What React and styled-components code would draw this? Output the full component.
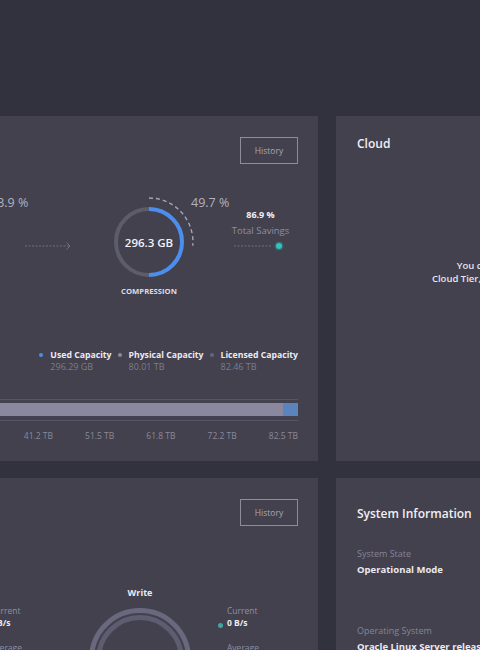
import React from 'react';
import styled, { createGlobalStyle } from 'styled-components';

const Global = createGlobalStyle`
  html, body {
    margin: 0;
    background: #32313e;
    overflow: hidden;
    font-family: "Open Sans", "DejaVu Sans", sans-serif;
    color: #ecebf2;
  }
  * { box-sizing: border-box; }
`

const Page = styled.div`
  display: flex;
  flex-direction: column;
  gap: 17px;
  padding-top: 116px;
  margin-left: -300px;
  width: 1200px;
`

const Row = styled.div`
  display: grid;
  grid-template-columns: 618px 403px;
  gap: 18px;
`

const Panel = styled.section`
  display: flex;
  flex-direction: column;
  background: #42414d;
  height: ${p => p.$h}px;
  padding: 21px 20px 20px 21px;
  overflow: hidden;
`

const Header = styled.div`
  display: flex;
  justify-content: space-between;
  align-items: center;
  height: 27px;
`

const Title = styled.h2`
  margin: ${p => p.$mt || 0}px 0 0;
  font-size: ${p => p.$size || 12}px;
  font-weight: 600;
  line-height: 14px;
  color: #f0eff5;
`

const HistoryButton = styled.button`
  width: 58px;
  height: 27px;
  background: transparent;
  border: 1px solid #8d8c9a;
  color: #a8a7b8;
  font-family: inherit;
  font-size: 8.5px;
  padding: 0;
`

/* capacity flow */
const Stages = styled.div`
  display: flex;
  align-items: flex-start;
  height: 100px;
  margin: 32px 0 0 192px;
`

const DonutCol = styled.div`
  display: flex;
  flex-direction: column;
  align-items: center;
  width: 70px;
  margin-top: 11px;
`

const Ring = styled.div`
  display: grid;
  place-items: center;
  width: 70px;
  height: 70px;
  & > * { grid-area: 1 / 1; }
`

const RingValue = styled.span`
  font-size: 11.5px;
  font-weight: 600;
  color: #f2f1f7;
`

const Caption = styled.span`
  margin-top: 9px;
  font-size: 7.7px;
  font-weight: 700;
  line-height: 11px;
  color: #dcdbe6;
  white-space: nowrap;
`

const ArcLabel = styled.span`
  width: 41px;
  margin-left: 7px;
  font-size: 12.5px;
  line-height: 14px;
  color: #b3b2c2;
  white-space: nowrap;
`

const Arrow = styled.svg`
  margin: 45px 42px 0 -6px;
  flex: none;
`

const Savings = styled.div`
  display: flex;
  flex-direction: column;
  align-items: center;
  width: 57px;
  margin-top: 13px;
`

const SavingsValue = styled.span`
  font-size: 9px;
  font-weight: 700;
  line-height: 12px;
  color: #f2f1f7;
`

const SavingsLabel = styled.span`
  margin-top: 3px;
  font-size: 9.5px;
  line-height: 14px;
  color: #8e8daa;
  white-space: nowrap;
`

const Legend = styled.div`
  display: flex;
  justify-content: flex-end;
  gap: 6px;
  margin-top: 53px;
`

const LegendItem = styled.div`
  display: flex;
  align-items: flex-start;
  gap: 7px;
`

const Dot = styled.span`
  width: ${p => p.$size || 4}px;
  height: ${p => p.$size || 4}px;
  margin-top: ${p => p.$mt || 4}px;
  border-radius: 50%;
  background: ${p => p.$color};
  flex: none;
`

const LegendText = styled.div`
  display: flex;
  flex-direction: column;
`

const LegendLabel = styled.span`
  font-size: 8.7px;
  font-weight: 700;
  line-height: 12px;
  color: #eceaf2;
  white-space: nowrap;
`

const LegendValue = styled.span`
  font-size: 9px;
  line-height: 12px;
  color: #7d7c8e;
`

const Chart = styled.div`
  margin: 26px 0 0 87px;
`

const Track = styled.div`
  display: flex;
  padding: 3px 0 4px;
  border-top: 1px solid #56556a;
  border-bottom: 1px solid #56556a;
`

const Segment = styled.div`
  height: 13px;
  background: ${p => p.$color};
`

const Axis = styled.div`
  display: grid;
  grid-template-columns: repeat(8, 1fr);
  margin-top: 9px;
`

const Tick = styled.span`
  text-align: right;
  font-size: 8.5px;
  line-height: 12px;
  color: #8a899c;
`

/* cloud */
const Message = styled.p`
  margin: 108px 0 0;
  text-align: center;
  font-size: 9.5px;
  font-weight: 600;
  line-height: 13px;
  color: #e6e5ee;
`

/* performance */
const Units = styled.div`
  display: flex;
  align-items: flex-start;
  gap: 48px;
  margin: 61px 0 0 131px;
`

const Unit = styled.div`
  display: flex;
  align-items: flex-start;
`

const UnitCol = styled.div`
  display: flex;
  flex-direction: column;
  align-items: center;
  width: 102px;
`

const UnitTitle = styled.span`
  font-size: 9px;
  font-weight: 700;
  line-height: 12px;
  color: #eceaf2;
  margin-bottom: 9px;
`

const Stats = styled.div`
  display: flex;
  flex-direction: column;
  width: 60px;
  margin: 18px 0 0 27px;
`

const StatLabel = styled.span`
  padding-left: 9px;
  margin-top: ${p => p.$mt || 0}px;
  font-size: 8.5px;
  line-height: 12px;
  color: #8f8ea8;
`

const StatValue = styled.span`
  display: flex;
  align-items: center;
  gap: 4px;
  font-size: 8.5px;
  font-weight: 700;
  line-height: 12px;
  color: #eceaf2;
  white-space: nowrap;
`

/* system info */
const InfoLabel = styled.span`
  margin-top: ${p => p.$mt}px;
  font-size: 9px;
  line-height: 12px;
  color: #85849a;
`

const InfoValue = styled.span`
  margin-top: 3px;
  font-size: 9.5px;
  font-weight: 700;
  line-height: 14px;
  color: #eceaf2;
  white-space: nowrap;
`

const Donut = ({ value, caption, label, dashEnd }) => (
  <>
    <DonutCol>
      <Ring>
        <svg width="70" height="70" viewBox="0 0 70 70" overflow="visible">
          <circle cx="35" cy="35" r="33" fill="none" stroke="#5d5c6b" strokeWidth="4" />
          <path d="M35 2 A33 33 0 0 1 35 68" fill="none" stroke="#4a8ef0" strokeWidth="4" />
          <path d={`M35 -9 A44 44 0 0 1 ${dashEnd}`} fill="none" stroke="#a5a4b2" strokeWidth="1.4" strokeDasharray="4 3" />
        </svg>
        <RingValue>{value}</RingValue>
      </Ring>
      <Caption>{caption}</Caption>
    </DonutCol>
    <ArcLabel>{label}</ArcLabel>
  </>
)

const FlowArrow = () => (
  <Arrow width="47" height="10" viewBox="0 0 47 10">
    <line x1="0" y1="5" x2="45" y2="5" stroke="#6f6e80" strokeWidth="1" strokeDasharray="2 1.5" />
    <path d="M41.5 1.5 L45 5 L41.5 8.5" fill="none" stroke="#6f6e80" strokeWidth="1" />
  </Arrow>
)

const RwRing = () => (
  <svg width="102" height="102" viewBox="0 0 102 102">
    <circle cx="51" cy="51" r="48.5" fill="none" stroke="#69687e" strokeWidth="5" />
    <circle cx="51" cy="51" r="41.5" fill="none" stroke="#5d5c71" strokeWidth="5" />
  </svg>
)

const ticks = ['10.3 TB', '20.6 TB', '30.9 TB', '41.2 TB', '51.5 TB', '61.8 TB', '72.2 TB', '82.5 TB']
const axisMax = 82.5
const physical = 80.01
const licensed = 82.46

const legend = [
  { label: 'Used Capacity', value: '296.29 GB', color: '#4f8de8' },
  { label: 'Physical Capacity', value: '80.01 TB', color: '#8a899c' },
  { label: 'Licensed Capacity', value: '82.46 TB', color: '#5f6584' },
]

const RwUnit = ({ title }) => (
  <Unit>
    <UnitCol>
      <UnitTitle>{title}</UnitTitle>
      <RwRing />
    </UnitCol>
    <Stats>
      <StatLabel>Current</StatLabel>
      <StatValue><Dot $color="#3fa79f" $size={5} $mt={0} />0 B/s</StatValue>
      <StatLabel $mt={13}>Average</StatLabel>
      <StatValue><Dot $color="#3fa79f" $size={5} $mt={0} />0 B/s</StatValue>
    </Stats>
  </Unit>
)

export default function App() {
  return (
    <>
      <Global />
      <Page>
        <Row>
          <Panel $h={345}>
            <Header>
              <Title>Capacity</Title>
              <HistoryButton>History</HistoryButton>
            </Header>
            <Stages>
              <Donut value="1.2 TB" caption="DEDUPLICATION" label="13.9 %" dashEnd="66.1 66.1" />
              <FlowArrow />
              <Donut value="296.3 GB" caption="COMPRESSION" label="49.7 %" dashEnd="78.8 38.8" />
              <Savings>
                <SavingsValue>86.9 %</SavingsValue>
                <SavingsLabel>Total Savings</SavingsLabel>
                <svg width="57" height="10" viewBox="0 0 57 10" style={{ marginTop: 3 }}>
                  <line x1="2" y1="5" x2="40" y2="5" stroke="#6f6e80" strokeWidth="1" strokeDasharray="2 1.5" />
                  <circle cx="47" cy="5" r="4.5" fill="#2ab3b3" opacity="0.3" />
                  <circle cx="47" cy="5" r="3" fill="#2fc4c0" />
                </svg>
              </Savings>
            </Stages>
            <Legend>
              {legend.map(l => (
                <LegendItem key={l.label}>
                  <Dot $color={l.color} />
                  <LegendText>
                    <LegendLabel>{l.label}</LegendLabel>
                    <LegendValue>{l.value}</LegendValue>
                  </LegendText>
                </LegendItem>
              ))}
            </Legend>
            <Chart>
              <Track>
                <Segment $color="#8a889f" style={{ width: `${(physical / axisMax) * 100}%` }} />
                <Segment $color="#5b84bd" style={{ width: `${((licensed - physical) / axisMax) * 100}%` }} />
              </Track>
              <Axis>
                {ticks.map(t => <Tick key={t}>{t}</Tick>)}
              </Axis>
            </Chart>
          </Panel>
          <Panel $h={345}>
            <Title $mt={0}>Cloud</Title>
            <Message>
              You do not have any cloud units for<br />
              Cloud Tier, configure a new cloud unit to start.
            </Message>
          </Panel>
        </Row>
        <Row>
          <Panel $h={300}>
            <Header>
              <Title>Throughput</Title>
              <HistoryButton>History</HistoryButton>
            </Header>
            <Units>
              <RwUnit title="Read" />
              <RwUnit title="Write" />
            </Units>
          </Panel>
          <Panel $h={300}>
            <Title $mt={8} $size={12}>System Information</Title>
            <InfoLabel $mt={27}>System State</InfoLabel>
            <InfoValue>Operational Mode</InfoValue>
            <InfoLabel $mt={48}>Operating System</InfoLabel>
            <InfoValue>Oracle Linux Server release 7.9</InfoValue>
          </Panel>
        </Row>
      </Page>
    </>
  )
}
